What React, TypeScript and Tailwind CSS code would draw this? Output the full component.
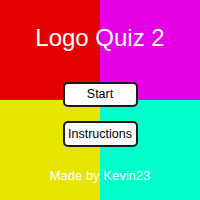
export default function App() {
  return (
    <div className="grid w-[200px] h-[200px] overflow-hidden font-['Liberation_Sans',Arial,sans-serif]">
      {/* Quadrant background */}
      <div className="col-start-1 row-start-1 grid grid-cols-2 grid-rows-2">
        <div className="bg-[#e60000]" />
        <div className="bg-[#e600e6]" />
        <div className="bg-[#e6e600]" />
        <div className="bg-[#00ffcc]" />
      </div>

      {/* Menu */}
      <div className="col-start-1 row-start-1 flex flex-col items-center pt-[26px]">
        <h1 className="text-[24px] leading-none text-white">Logo Quiz 2</h1>
        <button className="mt-[32px] w-[75px] h-[25px] bg-white border-2 border-[#1a1a1a] rounded-[5px] text-[12.5px] leading-none text-black">
          Start
        </button>
        <button className="mt-[14px] w-[75px] h-[26px] bg-white border-2 border-[#1a1a1a] rounded-[5px] text-[12.5px] leading-none text-black">
          Instructions
        </button>
        <p className="mt-[22px] text-[13px] leading-none text-white">Made by Kevin23</p>
      </div>
    </div>
  );
}
